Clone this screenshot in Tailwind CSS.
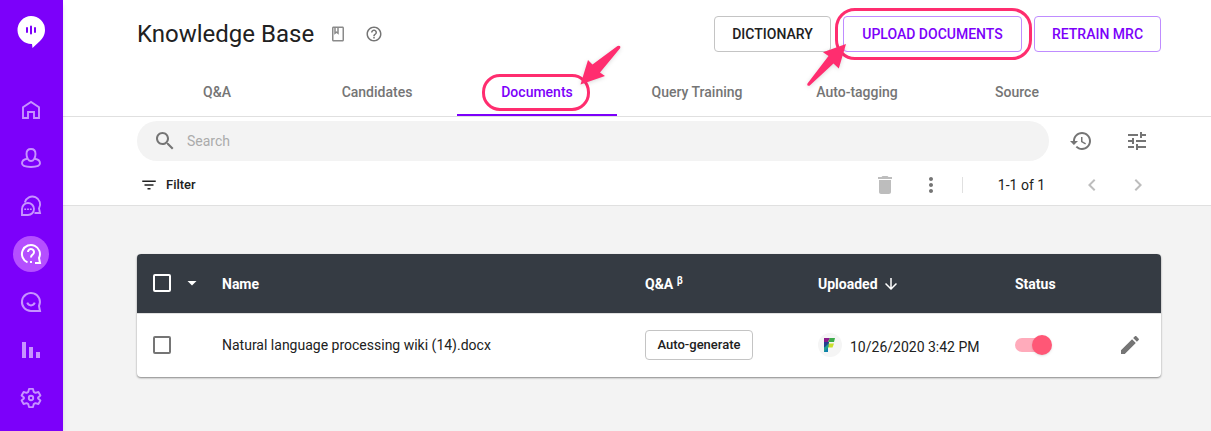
<!DOCTYPE html>
<html lang="en">
<head>
  <meta charset="UTF-8" />
  <meta name="viewport" content="width=device-width, initial-scale=1.0"/>
  <title>Knowledge Base</title>
  <script src="https://cdn.jsdelivr.net/npm/@tailwindcss/browser@4"></script>
</head>
<body class="flex min-h-screen bg-[#f3f3f3] font-[Roboto,sans-serif] text-sm text-[#212121]">

  <!-- Sidebar -->
  <nav class="z-10 flex w-[63px] shrink-0 flex-col items-center bg-[#7c00fa] pr-px text-[#c793ff] shadow-md" aria-label="Main">
    <a href="#" aria-label="Dashboard" class="mt-4 mb-11">
      <svg class="h-8 w-7" viewBox="0 0 28 32">
        <path fill="#fff" d="M14 0a14 14 0 0 1 14 14c0 5-2.500 8.500-5 11l-7.500 7-.5-4a14 14 0 0 1-1-28z"/>
        <path stroke="#7c00fa" stroke-width="2" stroke-linecap="round" d="M10 12v4M14 10.500v7M18 12v4"/>
      </svg>
    </a>
    <div class="flex flex-col items-center gap-3">
      <a href="#" aria-label="Home" class="flex size-9 items-center justify-center rounded-full">
        <svg class="size-6" viewBox="0 0 24 24" fill="none" stroke="currentColor" stroke-width="1.900"><path d="M4 20V9.200L12 4l8 5.200V20h-5v-6H9v6z"/></svg>
      </a>
      <a href="#" aria-label="Users" class="flex size-9 items-center justify-center rounded-full">
        <svg class="size-6" viewBox="0 0 24 24" fill="none" stroke="currentColor" stroke-width="1.900"><path d="M12 3c-2.900 0-4.500 2.100-4.500 5 0 3.700 2 7 4.500 7s4.500-3.300 4.500-7c0-2.900-1.600-5-4.500-5z"/><path d="M8.300 12.800C5 13.300 3 15 3 17.300 3 20 6.500 21 12 21s9-1 9-3.700c0-2.300-2-4-5.300-4.500"/></svg>
      </a>
      <a href="#" aria-label="Conversations" class="flex size-9 items-center justify-center rounded-full">
        <svg class="size-6" viewBox="0 0 24 24" fill="none" stroke="currentColor" stroke-width="1.900"><path d="M5.800 8.500A7.800 7.800 0 1 1 20 14.500l1 4.500h-5.500"/><path d="M3 21v-6a6 6 0 1 1 6 6z"/><path stroke-width="1.600" d="M5.300 15.200h1.800M8.100 15.200h1.800M10.900 15.200h1.800"/></svg>
      </a>
      <a href="#" aria-label="Knowledge Base" aria-current="page" class="flex size-9 items-center justify-center rounded-full bg-[#b54fff] text-white">
        <svg class="size-6" viewBox="0 0 24 24" fill="none" stroke="currentColor" stroke-width="2"><path d="M8.500 20.300A9 9 0 1 1 20 16l1 5h-5"/><path d="M9 10a3 3 0 1 1 4.700 2.500c-1.200.8-1.700 1.300-1.700 3M11 20h2"/></svg>
      </a>
      <a href="#" aria-label="Feedback" class="flex size-9 items-center justify-center rounded-full">
        <svg class="size-6" viewBox="0 0 24 24" fill="none" stroke="currentColor" stroke-width="2"><path d="M12 21a9 9 0 1 1 8-5l1 5z"/><path d="M8.200 12.700c.7 1.700 2 2.700 3.800 2.700s3.100-1 3.800-2.700"/></svg>
      </a>
      <a href="#" aria-label="Reports" class="flex size-9 items-center justify-center rounded-full">
        <svg class="size-6" viewBox="0 0 24 24" fill="currentColor"><path d="M3 4h4v16H3zM10 9h4v11h-4zM17 14h4v6h-4z"/></svg>
      </a>
      <a href="#" aria-label="Settings" class="flex size-9 items-center justify-center rounded-full">
        <svg class="size-6" viewBox="0 0 24 24" fill="none" stroke="currentColor" stroke-width="1.900" stroke-linejoin="round"><path d="M10 2.900h4l.7 3 1.700 1 3-.9 2 3.500-2.300 2v1l2.300 2-2 3.500-3-.9-1.700 1-.7 3h-4l-.7-3-1.700-1-3 .9-2-3.500 2.300-2v-1l-2.300-2 2-3.500 3 .9 1.700-1z"/><circle cx="12" cy="12" r="2.200"/></svg>
      </a>
    </div>
  </nav>

  <div class="min-w-0 flex-1">

    <!-- Header -->
    <header class="border-b border-[#e0e0e0] bg-white pr-[50px] pl-[74px]">
      <div class="flex h-[68px] items-center">
        <h1 class="text-2xl">Knowledge Base</h1>
        <a href="#" aria-label="Guide" class="ml-[15px] text-[#8a8a8a]">
          <svg class="size-[18px]" viewBox="0 0 24 24" fill="currentColor"><path d="M18 2H6c-1.100 0-2 .9-2 2v16c0 1.100.9 2 2 2h12c1.100 0 2-.9 2-2V4c0-1.100-.9-2-2-2zm0 18H6V4h1v9l3-2.250L13 13V4h5v16zM9 4h2v5l-1-.75L9 9z"/></svg>
        </a>
        <a href="#" aria-label="Help" class="ml-[18px] text-[#757575]">
          <svg class="size-[18px]" viewBox="0 0 24 24" fill="currentColor"><path d="M11 18h2v-2h-2v2zm1-16C6.480 2 2 6.480 2 12s4.480 10 10 10 10-4.480 10-10S17.520 2 12 2zm0 18c-4.410 0-8-3.590-8-8s3.590-8 8-8 8 3.590 8 8-3.590 8-8 8zm0-14c-2.210 0-4 1.790-4 4h2c0-1.100.9-2 2-2s2 .9 2 2c0 2-3 1.750-3 5h2c0-2.250 3-2.500 3-5 0-2.210-1.790-4-4-4z"/></svg>
        </a>
        <div class="ml-auto flex gap-3">
          <button class="h-9 w-[117px] rounded border border-[#c4c4c4] font-medium">DICTIONARY</button>
          <div class="relative">
            <button class="h-9 w-[179px] rounded border border-[#bf8cff] font-medium text-[#7c00fa]">UPLOAD DOCUMENTS</button>
            <!-- Callout -->
            <div class="pointer-events-none absolute -top-2 -right-2.5 -bottom-2 -left-2 rounded-[20px] border-3 border-[#ff2d6f]"></div>
            <svg class="pointer-events-none absolute top-6 -left-10 z-10 h-12 w-12 drop-shadow-sm" viewBox="0 0 48 48" fill="#ff2d6f"><path d="M43 4 20 12.300l5.500 3.700L4.500 43.500q-1 3 2 2.200L30.500 23.500l5.300 5z"/></svg>
          </div>
          <button class="h-9 w-[127px] rounded border border-[#bf8cff] font-medium text-[#7c00fa]">RETRAIN MRC</button>
        </div>
      </div>

      <!-- Tabs -->
      <nav class="flex h-12 font-medium text-[#757575]" aria-label="Sections">
        <a href="#" class="flex w-40 items-center justify-center">Q&amp;A</a>
        <a href="#" class="flex w-40 items-center justify-center">Candidates</a>
        <a href="#" aria-current="page" class="relative flex w-40 items-center justify-center border-b-2 border-[#7c00fa] pt-0.5 text-[#7c00fa]">
          Documents
          <!-- Callout -->
          <span class="pointer-events-none absolute top-1.5 left-[25px] h-[37px] w-[108px] rounded-[18px] border-3 border-[#ff2d6f]"></span>
          <svg class="pointer-events-none absolute -top-6 left-[120px] h-11 w-12 drop-shadow-sm" viewBox="0 0 48 44" fill="#ff2d6f"><path d="M3.500 40.500 11 16l4.500 4.500L40.500 2q3.500-1 2.800 2L23 28.500l5 3.500z"/></svg>
        </a>
        <a href="#" class="flex w-40 items-center justify-center">Query Training</a>
        <a href="#" class="flex w-40 items-center justify-center">Auto-tagging</a>
        <a href="#" class="flex w-40 items-center justify-center">Source</a>
      </nav>
    </header>

    <!-- Search and toolbar -->
    <section class="border-b border-[#e0e0e0] bg-white pt-1 pr-[50px] pl-[74px]">
      <div class="flex items-center pr-3 text-[#757575]">
        <label for="search" class="flex h-10 flex-1 items-center gap-2.5 rounded-full bg-[#f3f3f3] pl-4">
          <svg class="size-6" viewBox="0 0 24 24" fill="currentColor"><path d="M15.500 14h-.79l-.28-.27C15.410 12.590 16 11.110 16 9.500 16 5.910 13.090 3 9.500 3S3 5.910 3 9.500 5.910 16 9.500 16c1.610 0 3.090-.59 4.230-1.570l.27.28v.79l5 4.990L20.490 19l-4.990-5zm-6 0C7.010 14 5 11.990 5 9.500S7.010 5 9.500 5 14 7.010 14 9.500 11.990 14 9.500 14z"/></svg>
          <input id="search" type="search" placeholder="Search" aria-label="Search" class="flex-1 bg-transparent text-[#212121] outline-none placeholder:text-[#ababab]">
        </label>
        <button aria-label="History" class="ml-5">
          <svg class="size-6" viewBox="0 0 24 24" fill="currentColor"><path d="M13 3c-4.970 0-9 4.030-9 9H1l3.890 3.890.07.14L9 12H6c0-3.870 3.130-7 7-7s7 3.130 7 7-3.130 7-7 7c-1.930 0-3.680-.79-4.940-2.060l-1.420 1.420C8.270 19.990 10.510 21 13 21c4.970 0 9-4.030 9-9s-4.030-9-9-9zm-1 5v5l4.280 2.540.72-1.210-3.500-2.080V8H12z"/></svg>
        </button>
        <button aria-label="Settings" class="ml-8">
          <svg class="size-6" viewBox="0 0 24 24" fill="currentColor"><path d="M3 17v2h6v-2H3zM3 5v2h10V5H3zm10 16v-2h8v-2h-8v-2h-2v6h2zM7 9v2H3v2h4v2h2V9H7zm14 4v-2H11v2h10zm-6-4h2V7h4V5h-4V3h-2v6z"/></svg>
        </button>
      </div>
      <div class="flex h-11 items-center pt-1 pr-[11px]">
        <button class="flex items-center gap-2 pl-[3px] text-[13px] font-medium">
          <svg class="size-[18px]" viewBox="0 0 24 24" fill="currentColor"><path d="M10 18h4v-2h-4v2zM3 6v2h18V6H3zm3 7h12v-2H6v2z"/></svg>
          Filter
        </button>
        <button aria-label="Delete" class="ml-auto text-[#bdbdbd]">
          <svg class="size-6" viewBox="0 0 24 24" fill="currentColor"><path d="M6 19c0 1.100.9 2 2 2h8c1.100 0 2-.9 2-2V7H6v12zM19 4h-3.500l-1-1h-5l-1 1H5v2h14V4z"/></svg>
        </button>
        <button aria-label="More" class="ml-[22px] text-[#757575]">
          <svg class="size-6" viewBox="0 0 24 24" fill="currentColor"><path d="M12 8c1.100 0 2-.9 2-2s-.9-2-2-2-2 .9-2 2 .9 2 2 2zm0 2c-1.100 0-2 .9-2 2s.9 2 2 2 2-.9 2-2-.9-2-2-2zm0 6c-1.100 0-2 .9-2 2s.9 2 2 2 2-.9 2-2-.9-2-2-2z"/></svg>
        </button>
        <div class="ml-[19px] h-4 w-px bg-[#e0e0e0]"></div>
        <span class="w-[117px] text-center">1-1 of 1</span>
        <button aria-label="Previous page" class="text-[#bdbdbd]">
          <svg class="size-6" viewBox="0 0 24 24" fill="currentColor"><path d="M15.410 7.410 14 6l-6 6 6 6 1.410-1.410L10.830 12z"/></svg>
        </button>
        <button aria-label="Next page" class="ml-[22px] text-[#bdbdbd]">
          <svg class="size-6" viewBox="0 0 24 24" fill="currentColor"><path d="M10 6 8.590 7.410 13.170 12l-4.580 4.590L10 18l6-6z"/></svg>
        </button>
      </div>
    </section>

    <!-- Documents table -->
    <main class="pt-12 pr-[50px] pb-12 pl-[74px]">
      <div class="overflow-hidden rounded bg-white shadow-[0_1px_2px_rgba(0,0,0,0.45)]">
        <table class="w-full table-fixed text-left">
          <thead class="bg-[#353b43] text-white">
            <tr class="h-[59px]">
              <th class="w-[85px] pl-4">
                <div class="flex items-center gap-[9px]">
                  <input type="checkbox" aria-label="Select all" class="size-[18px] appearance-none rounded-xs border-2 border-white checked:bg-white">
                  <button aria-label="Selection options">
                    <svg class="size-6" viewBox="0 0 24 24" fill="currentColor"><path d="m7.500 10 4.500 4.500 4.500-4.500z"/></svg>
                  </button>
                </div>
              </th>
              <th class="pt-0.5 font-bold">Name</th>
              <th class="w-[173px] pt-0.5 font-bold">Q&amp;A <sup class="text-[10px]">β</sup></th>
              <th class="w-[197px] pt-0.5 font-bold">
                <button class="flex items-center gap-1">
                  Uploaded
                  <svg class="size-[18px]" viewBox="0 0 24 24" fill="currentColor"><path d="m20 12-1.410-1.410L13 16.170V4h-2v12.170l-5.580-5.590L4 12l8 8z"/></svg>
                </button>
              </th>
              <th class="w-[94px] pt-0.5 font-bold">Status</th>
              <th class="w-[52px]"></th>
            </tr>
          </thead>
          <tbody>
            <tr class="h-16 border-t border-[#e0e0e0]">
              <td class="pl-4">
                <input type="checkbox" aria-label="Select document" class="block size-[18px] appearance-none rounded-xs border-2 border-[#757575] checked:bg-[#757575]">
              </td>
              <td>Natural language processing wiki (14).docx</td>
              <td>
                <button class="h-[30px] w-[108px] rounded border border-[#c4c4c4] text-[13px] font-medium">Auto-generate</button>
              </td>
              <td>
                <div class="flex items-center gap-2">
                  <svg class="size-6" viewBox="0 0 24 24">
                    <circle cx="12" cy="12" r="12" fill="#f5f5f5"/>
                    <path fill="#8b1a8b" d="M6 5h6l-2 4H6z"/>
                    <path fill="#23408f" d="M6 9h5v5H6z"/>
                    <path fill="#0b7fab" d="M6 14h4v5H6z"/>
                    <path fill="#3bab4a" d="M12 5h5l-1 4h-6z"/>
                    <path fill="#c9df2b" d="M10.500 10.500H16l-1.500 4H10z"/>
                    <path fill="#23a08f" d="m6 15 4.500-4.500V14L6 19z"/>
                  </svg>
                  <span class="pt-1">10/26/2020 3:42 PM</span>
                </div>
              </td>
              <td>
                <label class="relative flex h-5 w-9 items-center">
                  <input type="checkbox" checked aria-label="Status" class="peer h-3.5 w-[34px] appearance-none rounded-full bg-[#bdbdbd] checked:bg-[#ffabbb]">
                  <span class="absolute left-0 size-5 rounded-full bg-white shadow-sm peer-checked:left-[17px] peer-checked:bg-[#ff5776]"></span>
                </label>
              </td>
              <td>
                <button aria-label="Edit" class="ml-[9px] block text-[#757575]">
                  <svg class="size-6" viewBox="0 0 24 24" fill="currentColor"><path d="M3 17.250V21h3.750L17.810 9.940l-3.750-3.750L3 17.250zM20.710 7.040c.39-.39.39-1.020 0-1.410l-2.340-2.340c-.39-.39-1.020-.39-1.410 0l-1.830 1.830 3.750 3.750 1.830-1.830z"/></svg>
                </button>
              </td>
            </tr>
          </tbody>
        </table>
      </div>
    </main>
  </div>

</body>
</html>
